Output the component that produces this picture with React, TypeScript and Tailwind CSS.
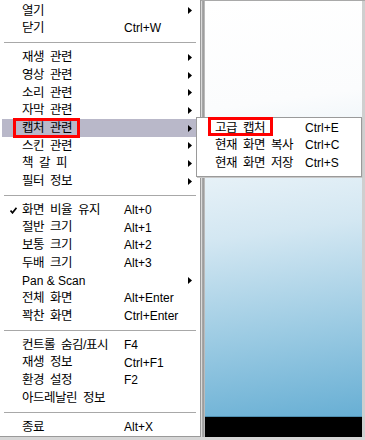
import React from 'react';

type Item =
  | { sep: true }
  | { sep?: false; label: string; key?: string; sub?: boolean; checked?: boolean; active?: boolean };

const items: Item[] = [
  { label: '열기', sub: true },
  { label: '닫기', key: 'Ctrl+W' },
  { sep: true },
  { label: '재생 관련', sub: true },
  { label: '영상 관련', sub: true },
  { label: '소리 관련', sub: true },
  { label: '자막 관련', sub: true },
  { label: '캡처 관련', sub: true, active: true },
  { label: '스킨 관련', sub: true },
  { label: '책 갈 피', sub: true },
  { label: '필터 정보', sub: true },
  { sep: true },
  { label: '화면 비율 유지', key: 'Alt+0', checked: true },
  { label: '절반 크기', key: 'Alt+1' },
  { label: '보통 크기', key: 'Alt+2' },
  { label: '두배 크기', key: 'Alt+3' },
  { label: 'Pan & Scan', sub: true },
  { label: '전체 화면', key: 'Alt+Enter' },
  { label: '꽉찬 화면', key: 'Ctrl+Enter' },
  { sep: true },
  { label: '컨트롤 숨김/표시', key: 'F4' },
  { label: '재생 정보', key: 'Ctrl+F1' },
  { label: '환경 설정', key: 'F2' },
  { label: '아드레날린 정보' },
  { sep: true },
  { label: '종료', key: 'Alt+X' },
];

const subItems = [
  { label: '고급 캡처', key: 'Ctrl+E' },
  { label: '현재 화면 복사', key: 'Ctrl+C' },
  { label: '현재 화면 저장', key: 'Ctrl+S' },
];

// hangul labels get Gulim-like metrics: 12px glyphs, 6px spaces
const hangul = /[\uac00-\ud7a3]/;
const labelCls = (s: string) =>
  hangul.test(s) ? 'text-[12.5px] tracking-[-0.5px] [word-spacing:3px]' : '';

const Arrow = () => (
  <svg width="4" height="7" viewBox="0 0 4 7" className="block">
    <path d="M0 0 L4 3.5 L0 7 Z" fill="#000" />
  </svg>
);

const Check = () => (
  <svg width="7" height="7" viewBox="0 0 7 7" className="block">
    <path d="M0.5 3.5 L2.5 5.8 L6.5 0.8" stroke="#000" strokeWidth="1.7" fill="none" />
  </svg>
);

export default function App() {
  return (
    <div
      className="relative w-[365px] h-[440px] overflow-hidden bg-[#d6d6d6] text-[12px] text-black leading-none"
      style={{ fontFamily: '"Liberation Sans", "Noto Sans CJK KR", sans-serif' }}
    >
      <div className="flex h-[437px]">
        {/* main popup menu */}
        <div className="w-[201px] shrink-0 bg-white border-r border-b border-[#9a9a9a] pt-[2px]">
          {items.map((it, i) =>
            it.sep ? (
              <div key={i} className="h-[11.33px] flex items-center px-[4px]">
                <div className="h-px w-full bg-[#a8a8a8]" />
              </div>
            ) : (
              <div
                key={i}
                className={`h-[17.67px] mx-[2px] flex items-center ${it.active ? 'bg-[#b9b8c9]' : ''}`}
              >
                <div className="w-[20px] flex justify-center pl-[2px]">{it.checked && <Check />}</div>
                <div className={`w-[102px] whitespace-nowrap ${labelCls(it.label)}`}>{it.label}</div>
                <div className="w-[64px] whitespace-nowrap">{it.key}</div>
                <div className="w-[8px]">{it.sub && <Arrow />}</div>
              </div>
            )
          )}
        </div>

        {/* player window behind */}
        <div className="flex-1 flex border-t border-[#a9a9a9]">
          <div className="w-[4px] bg-gradient-to-r from-[#f4f4f4] via-[#8f8f8f] to-[#c9c9c9]" />
          <div className="flex-1 flex flex-col">
            <div className="flex-1 bg-[linear-gradient(172deg,#ffffff_0%,#fbfcfd_25%,#d3e7f2_55%,#9ccbe3_78%,#68afd4_100%)] border-b border-[#4f8fb0]" />
            <div className="h-[20px] bg-black" />
          </div>
          <div className="w-[3px] bg-[#cfcfcf]" />
        </div>
      </div>

      {/* red box on main item */}
      <div className="absolute left-[13px] top-[118px] w-[67px] h-[20px] border-[3px] border-[#ff0000]" />

      {/* submenu */}
      <div className="absolute left-[196px] top-[117px] w-[166px] h-[60px] bg-white border border-[#9a9a9a] pt-[1px] shadow-[1px_1px_0_#c8c8c8]">
        {subItems.map((s) => (
          <div key={s.label} className="h-[17.67px] flex items-center pl-[18px]">
            <div className={`w-[90px] whitespace-nowrap ${labelCls(s.label)}`}>{s.label}</div>
            <div className="whitespace-nowrap">{s.key}</div>
          </div>
        ))}
      </div>
      <div className="absolute left-[208px] top-[117px] w-[65px] h-[19px] border-[3px] border-[#ff0000]" />
    </div>
  );
}
